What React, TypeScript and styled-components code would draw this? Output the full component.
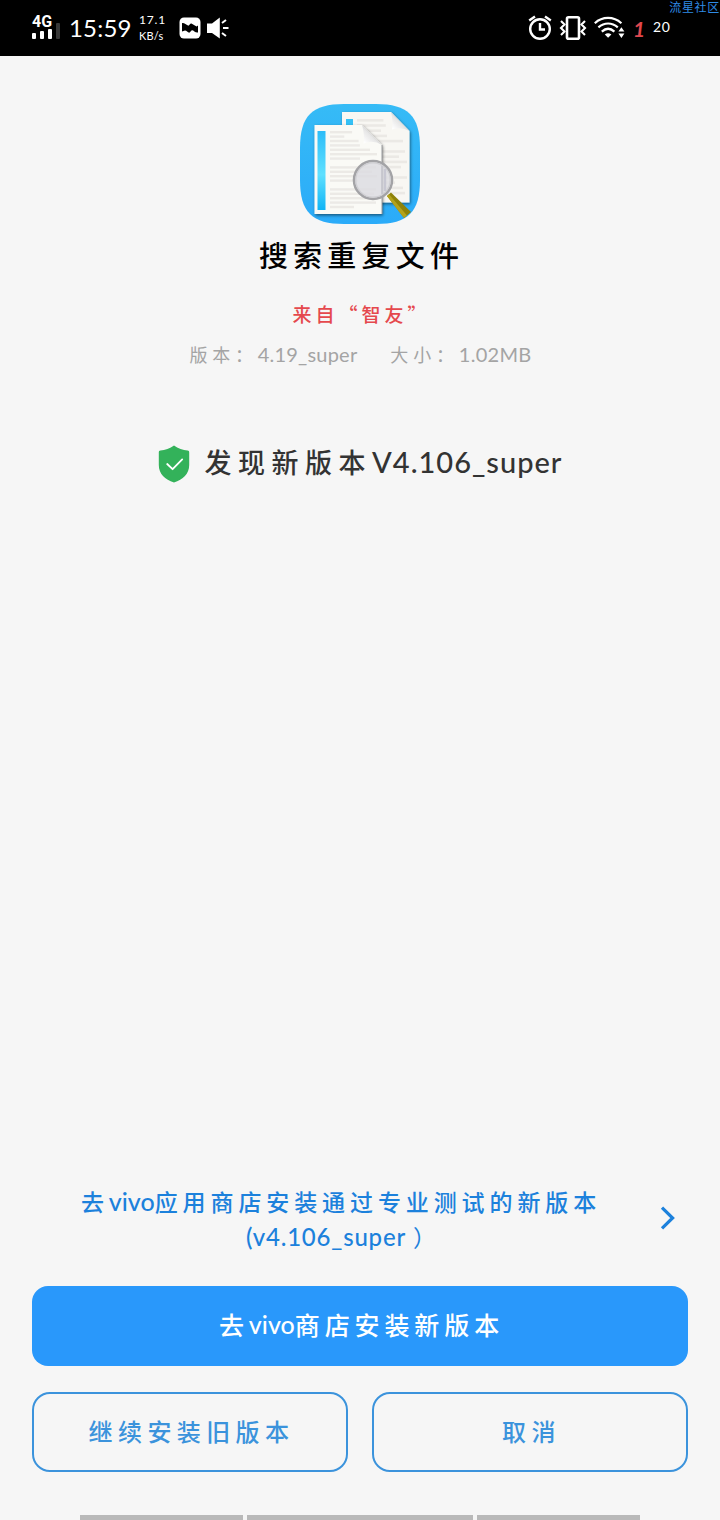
import React from 'react';
import styled, { createGlobalStyle } from 'styled-components';

const App = () => {
	return (
		<Screen>
			<GlobalStyle />
			<StatusBar>
				<StatusGroup>
					<SignalIcon />
					<Clock>15:59</Clock>
					<Speed>
						<span>17.1</span>
						<small>KB/s</small>
					</Speed>
					<MessageIcon />
					<SpeakerIcon />
				</StatusGroup>
				<StatusGroup $gap={8}>
					<AlarmIcon />
					<VibrateIcon />
					<WifiIcon />
					<BatteryMark>1</BatteryMark>
					<BatteryLevel>20</BatteryLevel>
				</StatusGroup>
				<Community>流星社区</Community>
			</StatusBar>

			<AppInfo>
				<AppIcon />
				<AppName>搜索重复文件</AppName>
				<Source>来自“智友”</Source>
				<Meta>
					<MetaItem>
						版本：
						<Latin $size={20} $gap={0.2}>
							4.19_super
						</Latin>
					</MetaItem>
					<MetaItem>
						大小：
						<Latin $size={20} $gap={0.3}>
							1.02MB
						</Latin>
					</MetaItem>
				</Meta>
			</AppInfo>

			<Found>
				<ShieldIcon />
				<FoundText>
					发现新版本
					<Latin $size={29} $gap={1}>
						V4.106_super
					</Latin>
				</FoundText>
			</Found>

			<Footer>
				<StoreLink>
					<StoreText>
						<div>
							去
							<Latin $size={25} $gap={0}>
								vivo
							</Latin>
							应用商店安装通过专业测试的新版本
						</div>
						<div>
							<Latin $size={24} $gap={0.8}>
								(v4.106_super
							</Latin>
							<Paren>）</Paren>
						</div>
					</StoreText>
					<ChevronIcon />
				</StoreLink>
				<PrimaryButton>
					去
					<Latin $size={25} $gap={0}>
						vivo
					</Latin>
					商店安装新版本
				</PrimaryButton>
				<ButtonRow>
					<OutlineButton>继续安装旧版本</OutlineButton>
					<OutlineButton>取消</OutlineButton>
				</ButtonRow>
			</Footer>
			<NavHints>
				<NavHint $width={163} />
				<NavHint $width={226} />
				<NavHint $width={163} />
			</NavHints>
		</Screen>
	);
};

export default App;

const SignalIcon = () => (
	<svg width='30' height='30' viewBox='0 0 30 30'>
		<text
			x='0'
			y='14'
			fill='#fff'
			fontFamily='Roboto, sans-serif'
			fontSize='16'
			fontWeight='700'
		>
			4G
		</text>
		<g fill='#fff'>
			<rect x='0' y='20' width='4' height='6' rx='1' />
			<rect x='8' y='18' width='4' height='8' rx='1' />
			<rect x='16' y='16' width='4' height='10' rx='1' />
		</g>
		<rect x='24' y='10' width='4' height='16' rx='1' fill='#383838' />
	</svg>
);

const MessageIcon = () => (
	<svg width='22' height='22' viewBox='0 0 22 22'>
		<rect x='.5' y='.5' width='21' height='21' rx='4.5' fill='#fff' />
		<path
			d='M3 6.2 C5 5.6 7 7.6 9 8.6 C10.4 9 11 6.2 12.4 6.6 L17.6 9.6 L19 8.4 V15.4 C16 15.8 14.4 12.8 12.8 13.2 L10.6 15.6 C9 16 7.6 13.6 6 13.6 L3 14.4 Z'
			fill='#000'
		/>
	</svg>
);

const SpeakerIcon = () => (
	<svg width='22' height='22' viewBox='0 0 22 22'>
		<path d='M0 6.5 H5 L12.8 .6 V21.4 L5 16 H0 Z' fill='#fff' />
		<path
			d='M15 6 L19 3 M16 11 H21.5 M15 16 L19 19'
			stroke='#fff'
			strokeWidth='2'
			fill='none'
		/>
	</svg>
);

const AlarmIcon = () => (
	<svg width='24' height='26' viewBox='0 0 24 26'>
		<g fill='none' stroke='#fff' strokeWidth='2.4'>
			<circle cx='12' cy='14' r='9.8' />
			<path d='M12 8 V14.5 H17' />
			<path d='M1.2 5.4 L7 1.4 M17 1.4 L22.8 5.4' />
		</g>
	</svg>
);

const VibrateIcon = () => (
	<svg width='26' height='26' viewBox='0 0 26 26'>
		<g fill='none' stroke='#fff'>
			<rect x='7' y='2.2' width='12' height='21.6' rx='1.5' strokeWidth='2.6' />
			<path
				d='M1 6 L4.5 9.5 L1 13 L4.5 16.5 L1 20 M25 6 L21.5 9.5 L25 13 L21.5 16.5 L25 20'
				strokeWidth='2.1'
			/>
		</g>
	</svg>
);

const WifiIcon = () => (
	<svg width='31' height='24' viewBox='0 0 31 24'>
		<g fill='none' stroke='#fff' strokeWidth='2.2'>
			<path d='M.8 7.2 C8.5 .2 19.5 .2 27.4 7.2' />
			<path d='M4.4 11.4 C10.4 6.2 17.8 6.2 23.8 11.4' />
			<path d='M7.8 15.6 C11.8 12 16.4 12 20.4 15.6' />
		</g>
		<path d='M10.8 18.4 Q14 16 17.4 18.4 L14.1 21.8 Z' fill='#fff' />
		<path
			d='M24.4 15.4 L27.4 11.2 L30.4 15.4 Z M24.4 17.6 H30.4 L27.4 22 Z'
			fill='#fff'
		/>
	</svg>
);

const ShieldIcon = () => (
	<svg width='32' height='38' viewBox='0 0 32 38'>
		<path
			d='M16 .6 C20 3.6 25 5.2 29.6 5.6 C30.8 5.8 31.2 6.4 31.2 7.4 V20 C31.2 29 25 34.6 16 37.4 C7 34.6 .8 29 .8 20 V7.4 C.8 6.4 1.2 5.8 2.4 5.6 C7 5.2 12 3.6 16 .6 Z'
			fill='#33b25a'
		/>
		<path
			d='M9.2 19 L14.6 24.2 L24.2 14.4'
			fill='none'
			stroke='#fff'
			strokeWidth='1.8'
			strokeLinecap='round'
			strokeLinejoin='round'
		/>
	</svg>
);

const ChevronIcon = () => (
	<svg width='16' height='24' viewBox='0 0 16 24'>
		<path
			d='M2 1.6 L12.6 12 L2 22.4'
			fill='none'
			stroke='#1c81dc'
			strokeWidth='3.2'
		/>
	</svg>
);

// widths of the grey text lines printed on the two sheets
const backLines = [44, 48, 40, 50, 46, 0, 48, 42, 50, 44, 0, 50, 38, 46, 48];
const frontLines = [34, 22, 44, 46, 40, 47, 30, 0, 46, 42, 47, 28, 0, 46, 44, 38, 46, 24];

const AppIcon = () => (
	<svg width='120' height='120' viewBox='0 0 120 120'>
		<defs>
			<linearGradient id='sky' x1='0' y1='0' x2='0' y2='1'>
				<stop offset='0' stopColor='#36bbf6' />
				<stop offset='1' stopColor='#2babf9' />
			</linearGradient>
			<linearGradient id='stripe' x1='0' y1='0' x2='0' y2='1'>
				<stop offset='0' stopColor='#2dbdf8' />
				<stop offset='.55' stopColor='#5fe0ff' />
				<stop offset='1' stopColor='#10b4f5' />
			</linearGradient>
			<linearGradient id='fold' x1='0' y1='1' x2='1' y2='0'>
				<stop offset='.1' stopColor='#fff' />
				<stop offset='.45' stopColor='#e6e6e6' />
				<stop offset='.7' stopColor='#9fa2a3' />
			</linearGradient>
			<clipPath id='iconShape'>
				<path d='M44 0 H76 C108 0 120 12 120 44 V76 C120 108 108 120 76 120 H44 C12 120 0 108 0 76 V44 C0 12 12 0 44 0 Z' />
			</clipPath>
			<filter id='soft' x='-20%' y='-20%' width='140%' height='140%'>
				<feDropShadow dx='1' dy='1.5' stdDeviation='1.4' floodOpacity='.5' />
			</filter>
		</defs>
		<g clipPath='url(#iconShape)'>
			<rect width='120' height='120' fill='url(#sky)' />
			<path
				d='M42 8 H91 L109.5 27 V98.5 H42 Z'
				fill='#f8f7f3'
				filter='url(#soft)'
			/>
			<rect x='46' y='15' width='7' height='10' fill='#35c1f6' />
			{backLines.map((width, i) => (
				<rect
					key={i}
					x='57'
					y={15 + i * 5.2}
					width={i < 4 ? width * 0.6 : width}
					height='2.6'
					fill='#ebe9e5'
				/>
			))}
			<path d='M91 8 Q93.5 19 92 25.5 Q101 22.5 109.5 27 Z' fill='url(#fold)' />
			<path
				d='M14.5 21 H62 L82 41 V110 H14.5 Z'
				fill='#fafaf6'
				filter='url(#soft)'
			/>
			<rect x='17.5' y='27' width='8' height='79' fill='url(#stripe)' />
			{frontLines.map((width, i) => (
				<rect
					key={i}
					x='30'
					y={27 + i * 4.4}
					width={i < 4 ? width * 0.65 : width}
					height='2.4'
					fill='#eceae6'
				/>
			))}
			<path d='M62 21 Q65 32 63.5 39.5 Q73 35.5 82 41 Z' fill='url(#fold)' />
			<path d='M82 41 V110' stroke='#9b9da0' strokeWidth='1' />
			<path d='M87 92 L91 88.5 L111 108 L104 114 Z' fill='#8e8208' />
			<path d='M87 92 L89 90.3 L107 111.5 L104 114 Z' fill='#b3a21a' />
			<circle
				cx='73'
				cy='76'
				r='19'
				fill='#dcdce0'
				fillOpacity='.82'
				stroke='#a3a3a6'
				strokeWidth='2.6'
			/>
			<circle
				cx='73'
				cy='76'
				r='17.2'
				fill='none'
				stroke='#cfcfd3'
				strokeWidth='1.3'
			/>
			<path d='M82 62 V90' stroke='#c2c2ca' strokeWidth='1.4' />
			<path d='M85 65 V87' stroke='#c7c7d2' strokeWidth='2.4' />
		</g>
	</svg>
);

const GlobalStyle = createGlobalStyle`
	* {
		box-sizing: border-box;
	}
	body {
		margin: 0;
		background-color: #f6f6f6;
		font-family: 'Noto Sans CJK SC', sans-serif;
	}
	svg {
		display: block;
		flex-shrink: 0;
		overflow: visible;
	}
`;

const Screen = styled.div`
	width: 720px;
	height: 1520px;
	display: flex;
	flex-direction: column;
	background-color: #f6f6f6;
	overflow: hidden;
	white-space: nowrap;
`;

const StatusBar = styled.header`
	position: relative;
	height: 56px;
	flex-shrink: 0;
	display: flex;
	justify-content: space-between;
	align-items: center;
	padding: 0 49px 0 32px;
	background-color: #000;
	color: #fff;
	font-family: Lato, sans-serif;
`;

const StatusGroup = styled.div<{ $gap?: number }>`
	display: flex;
	align-items: center;
	gap: ${({ $gap = 6 }) => $gap}px;
`;

const Clock = styled.span`
	width: 64px;
	margin-left: 1px;
	padding-bottom: 2px;
	font-size: 24px;
	letter-spacing: 0.2px;
`;

const Speed = styled.div`
	width: 34px;
	display: flex;
	flex-direction: column;
	font-size: 12px;
	line-height: 16px;
	letter-spacing: 0.8px;
	small {
		font-size: 11px;
		letter-spacing: 0.2px;
	}
`;

const BatteryMark = styled.span`
	width: 12px;
	text-align: center;
	font-size: 21px;
	font-style: italic;
	font-weight: 700;
	color: #e0484e;
`;

const BatteryLevel = styled.span`
	width: 18px;
	padding-bottom: 3px;
	font-size: 14px;
	letter-spacing: 0.6px;
`;

const Community = styled.span`
	position: absolute;
	top: -2px;
	right: 0;
	font-family: 'Noto Sans CJK SC', sans-serif;
	font-size: 12px;
	line-height: 17px;
	letter-spacing: 0.7px;
	color: #2f8be6;
`;

const Latin = styled.span<{ $size: number; $gap: number }>`
	font-family: Lato, sans-serif;
	font-size: ${({ $size }) => $size}px;
	letter-spacing: ${({ $gap }) => $gap}px;
`;

const AppInfo = styled.section`
	display: flex;
	flex-direction: column;
	align-items: center;
	padding-top: 48px;
`;

const AppName = styled.h1`
	margin: 10px 0 0 3px;
	font-size: 29px;
	font-weight: 500;
	line-height: 40px;
	letter-spacing: 5.2px;
	color: #000;
`;

const Source = styled.div`
	margin: 25px 0 0 3px;
	font-size: 19px;
	font-weight: 500;
	line-height: 30px;
	letter-spacing: 4px;
	color: #e5484d;
`;

const Meta = styled.div`
	display: flex;
	gap: 33px;
	margin: 10px 0 0 1px;
	font-size: 18px;
	line-height: 30px;
	letter-spacing: 4.8px;
	color: #a4a4a4;
`;

const MetaItem = styled.div`
	display: flex;
`;

const Found = styled.section`
	display: flex;
	justify-content: center;
	align-items: center;
	gap: 15px;
	height: 44px;
	margin-top: 73px;
`;

const FoundText = styled.div`
	display: flex;
	align-items: center;
	padding-bottom: 4px;
	font-size: 27px;
	font-weight: 500;
	line-height: 40px;
	letter-spacing: 6.5px;
	color: #333;
`;

const Footer = styled.footer`
	margin-top: auto;
	padding: 0 32px 43px;
`;

const StoreLink = styled.div`
	display: flex;
	align-items: center;
	justify-content: space-between;
	height: 72px;
	padding: 0 12px 0 21px;
	margin-bottom: 32px;
	color: #1c81dc;
`;

const StoreText = styled.div`
	width: 576px;
	padding-top: 1px;
	text-align: center;
	font-size: 23px;
	font-weight: 500;
	line-height: 36px;
	letter-spacing: 4.9px;
	div {
		display: flex;
		justify-content: center;
	}
`;

const Paren = styled.span`
	margin-left: 7px;
	letter-spacing: 0;
	font-weight: 400;
`;

const PrimaryButton = styled.button`
	display: flex;
	align-items: center;
	justify-content: center;
	width: 100%;
	height: 80px;
	padding: 0 0 4px 3px;
	border: none;
	border-radius: 16px;
	background-color: #2998fb;
	color: #fff;
	font-family: inherit;
	font-size: 25px;
	font-weight: 500;
	letter-spacing: 4.9px;
`;

const ButtonRow = styled.div`
	display: flex;
	gap: 24px;
	margin-top: 26px;
`;

const OutlineButton = styled.button`
	flex: 1;
	height: 80px;
	padding: 0 0 4px 3px;
	border: 2px solid #3b93dc;
	border-radius: 18px;
	background-color: transparent;
	color: #3b93dc;
	font-family: inherit;
	font-size: 24px;
	font-weight: 500;
	letter-spacing: 5.4px;
`;

const NavHints = styled.div`
	display: flex;
	justify-content: center;
	gap: 4px;
`;

const NavHint = styled.div<{ $width: number }>`
	width: ${({ $width }) => $width}px;
	height: 5px;
	background-color: #b9b9b9;
`;
